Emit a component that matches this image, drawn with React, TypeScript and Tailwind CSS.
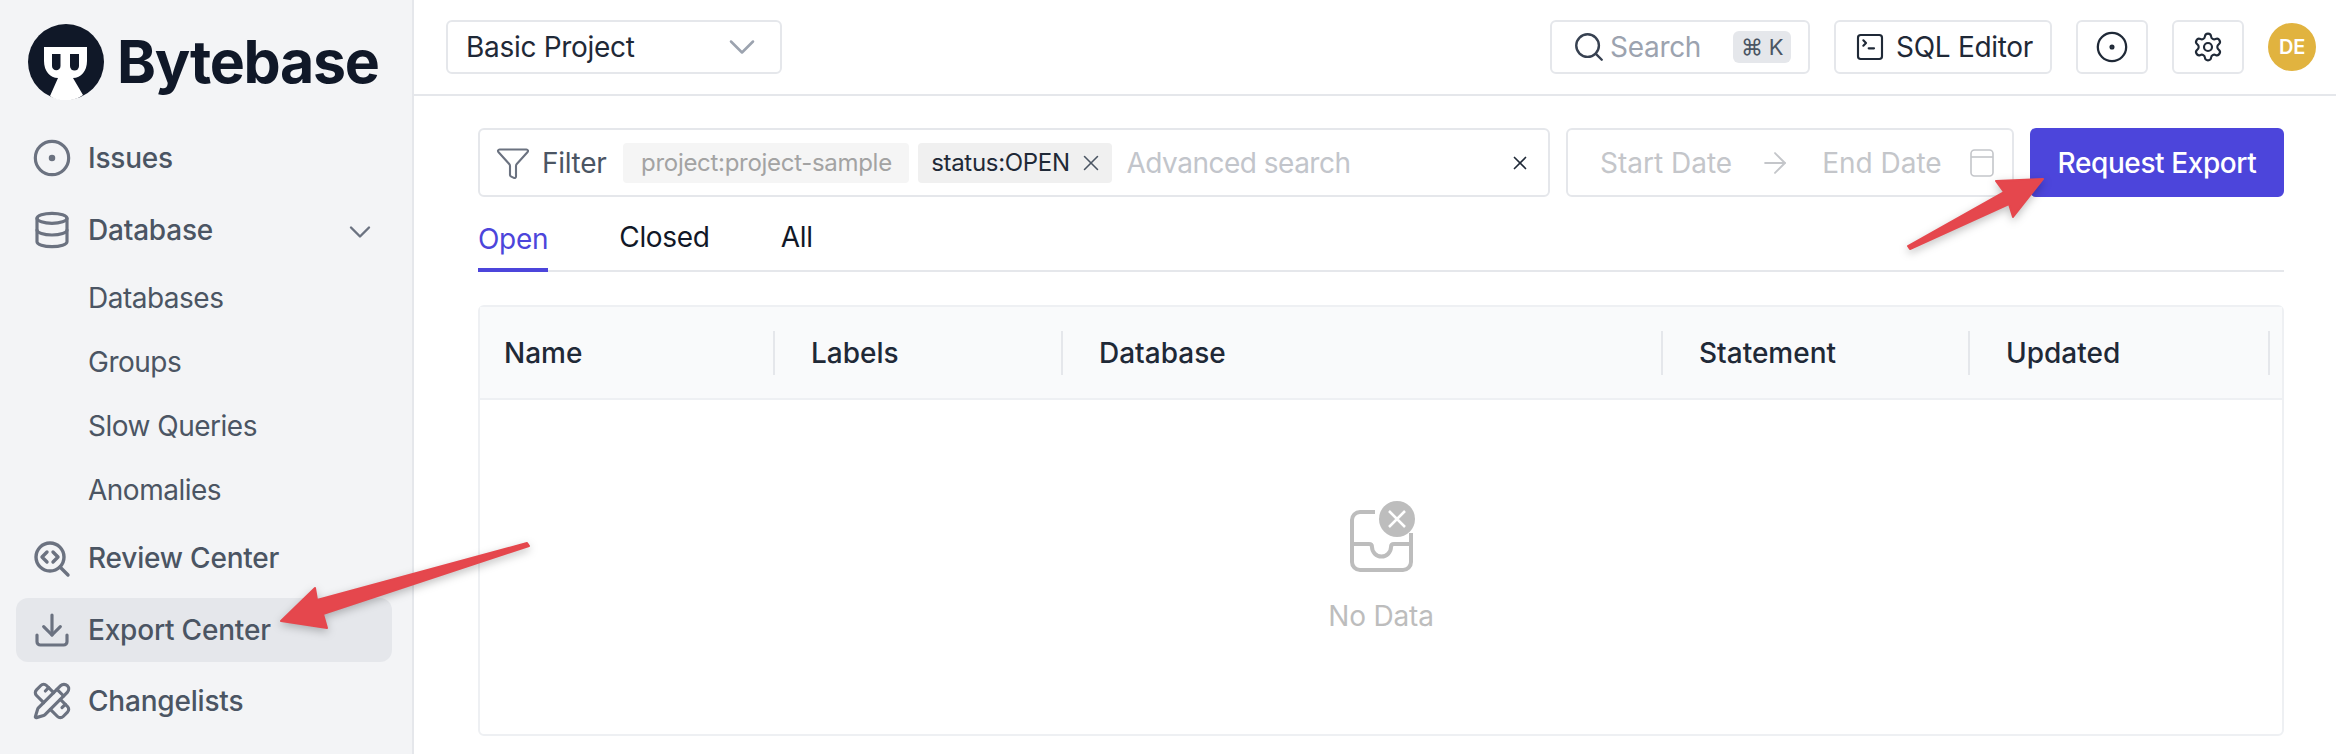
import {
  ArrowRight,
  ChevronDown,
  CircleDot,
  Database,
  Download,
  Funnel,
  PencilRuler,
  Search,
  Settings,
  SquareTerminal,
  X,
} from "lucide-react";

const SUB_ITEMS = ["Databases", "Groups", "Slow Queries", "Anomalies"];

const COLUMNS = [
  { name: "Name", cell: "w-[295px] pl-[24px]" },
  { name: "Labels", cell: "w-[288px] pl-[36px]" },
  { name: "Database", cell: "w-[600px] pl-[36px]" },
  { name: "Statement", cell: "w-[307px] pl-[36px]" },
  { name: "Updated", cell: "w-[300px] pl-[36px]" },
];

function Logo() {
  return (
    <div className="flex h-[126px] items-start pl-[28px] pt-[24px]">
      <svg width="76" height="76" viewBox="0 0 76 76" className="shrink-0">
        <circle cx="38" cy="38" r="38" fill="#101828" />
        <path
          d="M16 23H59V37C59 47 53 54 45 54L55 71C46 78 30 78 22 72L30 54C22 54 16 47 16 37Z"
          fill="#fff"
        />
        <path d="M24 30h8.500v12a4.250 4.250 0 0 1-8.500 0Z" fill="#101828" />
        <path d="M42 30h9v12a4.500 4.500 0 0 1-9 0Z" fill="#101828" />
      </svg>
      <span className="ml-[13px] text-[59px] font-bold leading-[76px] tracking-[-1.3px] text-[#101828]">
        Bytebase
      </span>
    </div>
  );
}

function ReviewIcon() {
  return (
    <svg
      width="44"
      height="44"
      viewBox="0 0 44 44"
      fill="none"
      stroke="currentColor"
      strokeWidth="3.4"
      strokeLinecap="round"
      strokeLinejoin="round"
      className="shrink-0"
    >
      <circle cx="20" cy="21" r="14" />
      <path d="M30 31l8 8" />
      <path d="M17 16l-5 5 5 5" />
      <path d="M23 16l5 5-5 5" />
    </svg>
  );
}

function NavItem({
  icon,
  label,
  active,
  className,
}: {
  icon: React.ReactNode;
  label: string;
  active?: boolean;
  className?: string;
}) {
  return (
    <div
      className={`flex h-[64px] items-center gap-4 rounded-xl pl-4 text-[28px] font-medium tracking-[-0.2px] text-[#4b5563] ${
        active ? "bg-[#e5e7eb]" : ""
      } ${className ?? ""}`}
    >
      <span className="flex w-10 items-center justify-center text-[#6b7280]">{icon}</span>
      {label}
    </div>
  );
}

function Sidebar() {
  return (
    <aside className="w-[414px] shrink-0 border-r-2 border-[#e5e7eb] bg-[#f3f4f6]">
      <Logo />
      <nav className="pl-4 pr-[20px]">
        <NavItem icon={<CircleDot size={44} strokeWidth={1.9} />} label="Issues" />
        <div className="relative mt-2">
          <NavItem icon={<Database size={44} strokeWidth={1.9} />} label="Database" />
          <ChevronDown
            size={36}
            strokeWidth={1.6}
            className="absolute right-[14px] top-[16px] text-[#6b7280]"
          />
        </div>
        <div className="mt-1">
          {SUB_ITEMS.map((item) => (
            <div
              key={item}
              className="flex h-[64px] items-center pl-[72px] text-[28px] tracking-[-0.5px] text-[#4b5563]"
            >
              {item}
            </div>
          ))}
        </div>
        <NavItem icon={<ReviewIcon />} label="Review Center" className="mt-[4px]" />
        <NavItem icon={<Download size={44} strokeWidth={1.9} />} label="Export Center" active className="mt-2" />
        <NavItem icon={<PencilRuler size={44} strokeWidth={1.9} />} label="Changelists" className="mt-[7px]" />
      </nav>
    </aside>
  );
}

function Header() {
  return (
    <header className="flex h-[96px] shrink-0 items-center justify-between border-b-2 border-[#e5e7eb] pl-8 pr-5 tracking-[-0.3px]">
      <div className="flex h-[54px] w-[336px] items-center justify-between rounded-md border-2 border-[#e5e7eb] pl-[18px] pr-[24px] text-[28px] text-[#1f2937]">
        Basic Project
        <ChevronDown size={44} strokeWidth={1.4} className="-mr-2 text-[#9ca3af]" />
      </div>
      <div className="flex items-center gap-6">
        <div className="flex h-[54px] w-[260px] items-center rounded-md border-2 border-[#e5e7eb] pl-[20px] text-[28px] text-[#9ca3af]">
          <Search size={34} strokeWidth={1.7} className="text-[#374151]" />
          <span className="ml-[4px]">Search</span>
          <span className="ml-[32px] flex h-[32px] w-[58px] items-center justify-center rounded-md bg-[#e5e7eb] text-[22px] text-[#4b5563]">
            ⌘ K
          </span>
        </div>
        <div className="flex h-[54px] w-[218px] items-center gap-[10px] rounded-md border-2 border-[#e5e7eb] pl-[18px] text-[28px] text-[#1f2937]">
          <SquareTerminal size={32} strokeWidth={1.6} />
          SQL Editor
        </div>
        <div className="flex h-[54px] w-[72px] items-center justify-center rounded-md border-2 border-[#e5e7eb] text-[#1f2937]">
          <CircleDot size={34} strokeWidth={1.6} />
        </div>
        <div className="flex h-[54px] w-[72px] items-center justify-center rounded-md border-2 border-[#e5e7eb] text-[#1f2937]">
          <Settings size={32} strokeWidth={1.6} />
        </div>
        <div className="flex h-[48px] w-[48px] items-center justify-center rounded-full bg-[#e1b33f] text-[20px] font-semibold text-white">
          DE
        </div>
      </div>
    </header>
  );
}

function FilterBar() {
  return (
    <div className="flex h-[69px] items-stretch gap-4 tracking-[-0.3px]">
      <div className="flex w-[1072px] items-center rounded-md border-2 border-[#e5e7eb] pl-[15px] text-[#1f2937]">
        <Funnel size={36} strokeWidth={1.4} className="text-[#6b7280]" />
        <span className="ml-[11px] text-[28px] text-[#4b5563]">Filter</span>
        <span className="ml-[17px] flex h-[40px] w-[286px] items-center justify-center rounded-sm bg-[#f5f5f5] text-[24px] text-[#a3a3a3]">
          project:project-sample
        </span>
        <span className="ml-[9px] flex h-[40px] w-[194px] items-center justify-center gap-2 rounded-sm bg-[#f0f0f0] pl-1 text-[24px]">
          status:OPEN
          <X size={26} strokeWidth={1.4} className="text-[#4b5563]" />
        </span>
        <span className="ml-[14px] flex-1 text-[28px] tracking-[-0.5px] text-[#c2c5cb]">Advanced search</span>
        <X size={22} strokeWidth={1.8} className="mr-[17px] text-[#1f2937]" />
      </div>
      <div className="flex w-[448px] items-center rounded-md border-2 border-[#e5e7eb] pl-[32px] text-[28px] tracking-normal text-[#c4c6ca]">
        <span>Start Date</span>
        <ArrowRight size={34} strokeWidth={1.3} className="ml-[26px]" />
        <span className="ml-[30px]">End Date</span>
        <svg
          width="24"
          height="28"
          viewBox="0 0 24 28"
          fill="none"
          stroke="currentColor"
          strokeWidth="1.6"
          className="ml-[28px]"
        >
          <rect x="1" y="1" width="22" height="26" rx="3.5" />
          <path d="M1 8h22" />
        </svg>
      </div>
      <div className="flex w-[254px] items-center justify-center rounded-md bg-[#4c45db] text-[28px] font-medium tracking-[-0.4px] text-white">
        Request Export
      </div>
    </div>
  );
}

function Tabs() {
  return (
    <div className="flex h-[75px] items-end gap-[71px] border-b-2 border-[#e5e7eb] text-[28px] tracking-[-0.3px] text-[#111827]">
      <span className="-mb-[2px] flex h-[60px] items-start border-b-[4px] border-[#4c45db] pt-[6px] text-[#4c45db]">
        Open
      </span>
      <span className="flex h-[60px] items-start pt-[6px]">Closed</span>
      <span className="flex h-[60px] items-start pt-[6px]">All</span>
    </div>
  );
}

function EmptyIcon() {
  return (
    <svg width="72" height="76" viewBox="0 0 72 76" fill="none" stroke="#bdbdbd" strokeWidth="4">
      <path d="M30 13H15a8 8 0 0 0-8 8V63a8 8 0 0 0 8 8H58a8 8 0 0 0 8-8V34" />
      <path d="M7 45H24c2 0 3 1 3 3a9.500 9.500 0 0 0 19 0c0-2 1-3 3-3H66" />
      <circle cx="52" cy="20" r="18" fill="#bdbdbd" stroke="none" />
      <path d="M44 12l16 16M60 12L44 28" stroke="#fff" strokeWidth="2.500" />
    </svg>
  );
}

function DataTable() {
  return (
    <div className="mt-[33px] flex h-[431px] flex-col rounded-md border-2 border-[#eef0f3]">
      <div className="flex h-[93px] shrink-0 border-b-2 border-[#eef0f3] bg-[#f9fafb]">
        {COLUMNS.map((col) => (
          <div
            key={col.name}
            className={`flex items-center justify-between text-[28px] font-medium text-[#1f2937] ${col.cell}`}
          >
            {col.name}
            <span className="h-[44px] w-[2px] bg-[#e5e7eb]" />
          </div>
        ))}
      </div>
      <div className="flex flex-1 flex-col items-center pt-[99px]">
        <EmptyIcon />
        <span className="mt-[21px] text-[28px] leading-10 tracking-[-0.2px] text-[#bdbdbd]">No Data</span>
      </div>
    </div>
  );
}

function Arrows() {
  return (
    <svg
      width="2336"
      height="754"
      viewBox="0 0 2336 754"
      className="pointer-events-none absolute left-0 top-0 drop-shadow-[0_3px_4px_rgba(0,0,0,0.25)]"
    >
      <path
        d="M527 543L529 546L323 614L327 628L281 621L315 588L317 600Z"
        fill="#e5474d"
        stroke="#e5474d"
        strokeWidth="2"
        strokeLinejoin="round"
      />
      <path
        d="M1908 246L1910 249L2009 204L2013 217L2043 179L1996 181L2004 192Z"
        fill="#e5474d"
        stroke="#e5474d"
        strokeWidth="2"
        strokeLinejoin="round"
      />
    </svg>
  );
}

export default function App() {
  return (
    <div className="relative flex h-[754px] w-[2336px] overflow-hidden bg-white font-['Inter',sans-serif]">
      <Sidebar />
      <main className="flex min-w-0 flex-1 flex-col">
        <Header />
        <div className="pl-16 pr-[52px] pt-8">
          <FilterBar />
          <Tabs />
          <DataTable />
        </div>
      </main>
      <Arrows />
    </div>
  );
}
